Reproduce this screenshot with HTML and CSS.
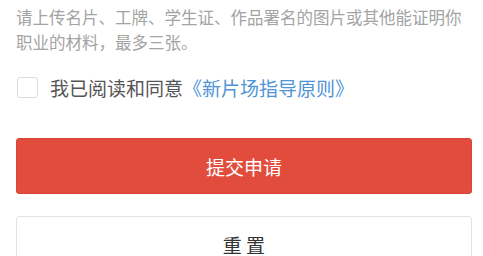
FILE: index.html
```html
<!DOCTYPE html>
<html lang="zh-CN">
<head>
    <meta charset="UTF-8">
    <meta name="viewport" content="width=device-width, initial-scale=1.0">
    <title>提交申请</title>
    <link rel="stylesheet" href="styles.css">
</head>
<body>
    <div class="form">
        <p class="hint">请上传名片、工牌、学生证、作品署名的图片或其他能证明你职业的材料，最多三张。</p>

        <label class="agree">
            <input type="checkbox" class="agree-box">
            <span class="agree-text">我已阅读和同意<a href="#" class="agree-link">《新片场指导原则》</a></span>
        </label>

        <div class="actions">
            <button class="btn btn-primary">提交申请</button>
            <button class="btn btn-default">重 置</button>
        </div>
    </div>
</body>
</html>
```

FILE: styles.css
```css
* {
    margin: 0;
    padding: 0;
    box-sizing: border-box;
    font-family: 'Noto Sans CJK SC', 'Noto Sans', sans-serif;
}

body {
    background: #fff;
    padding: 0 11px 0 16px;
}

.form {
    padding-top: 5px;
}

.hint {
    font-size: 16.5px;
    line-height: 25px;
    color: #a3a3a3;
}

.agree {
    display: flex;
    align-items: center;
    height: 24px;
    margin-top: 20px;
    cursor: pointer;
}

.agree-box {
    appearance: none;
    width: 21px;
    height: 21px;
    margin-left: 1px;
    border: 1px solid #dcdcdc;
    border-radius: 3px;
    background: #fff;
    flex-shrink: 0;
}

.agree-text {
    margin-left: 12px;
    font-size: 19px;
    color: #555;
}

.agree-link {
    color: #4f94d6;
    text-decoration: none;
}

.actions {
    display: flex;
    flex-direction: column;
    gap: 22px;
    margin-top: 39px;
}

.btn {
    height: 56px;
    width: 100%;
    border-radius: 3px;
    font-size: 19px;
    cursor: pointer;
}

.btn-primary {
    background: #e24c3d;
    color: #fff;
    border: 1px solid #d8463a;
}

.btn-default {
    background: #fff;
    color: #333;
    border: 1px solid #e3e3e3;
}
```
